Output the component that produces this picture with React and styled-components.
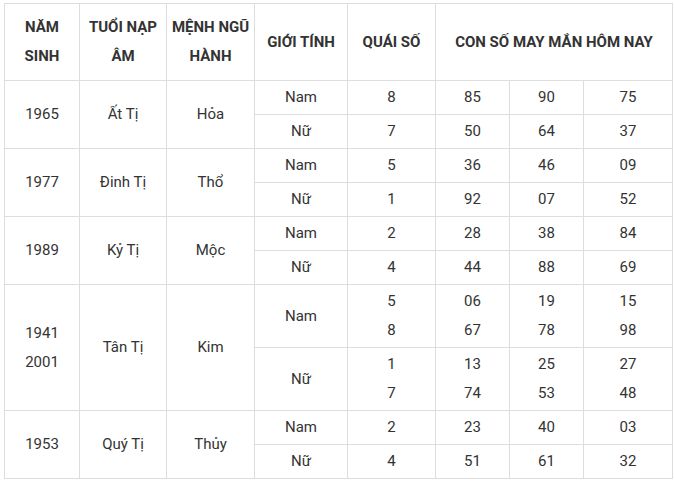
import React from 'react';
import styled, { createGlobalStyle } from 'styled-components';

const GlobalStyle = createGlobalStyle`
  body {
    margin: 0;
    padding: 3px 2px 0 4px;
    background: #ffffff;
    font-family: Roboto, "Liberation Sans", Arial, sans-serif;
  }
`;

const Table = styled.table`
  width: 668px;
  border-collapse: collapse;
  table-layout: fixed;
  color: #333333;
  font-size: 15px;
  line-height: 29px;
`;

const HeadCell = styled.th`
  border: 1px solid #dddddd;
  padding: 9px 2px;
  font-weight: 700;
  text-align: center;
  vertical-align: middle;
  white-space: nowrap;
`;

const Cell = styled.td`
  border: 1px solid #dddddd;
  padding: 2px 4px;
  text-align: center;
  vertical-align: middle;
  font-weight: 400;
`;

const Line = styled.div`
  line-height: 29px;
`;

const widths = [75, 87, 88, 93, 88, 74, 74, 89];

const data = [
  {
    year: ['1965'], tuoi: 'Ất Tị', menh: 'Hỏa',
    rows: [
      { g: 'Nam', q: ['8'], n: [['85'], ['90'], ['75']] },
      { g: 'Nữ', q: ['7'], n: [['50'], ['64'], ['37']] },
    ],
  },
  {
    year: ['1977'], tuoi: 'Đinh Tị', menh: 'Thổ',
    rows: [
      { g: 'Nam', q: ['5'], n: [['36'], ['46'], ['09']] },
      { g: 'Nữ', q: ['1'], n: [['92'], ['07'], ['52']] },
    ],
  },
  {
    year: ['1989'], tuoi: 'Kỷ Tị', menh: 'Mộc',
    rows: [
      { g: 'Nam', q: ['2'], n: [['28'], ['38'], ['84']] },
      { g: 'Nữ', q: ['4'], n: [['44'], ['88'], ['69']] },
    ],
  },
  {
    year: ['1941', '2001'], tuoi: 'Tân Tị', menh: 'Kim',
    rows: [
      { g: 'Nam', q: ['5', '8'], n: [['06', '67'], ['19', '78'], ['15', '98']] },
      { g: 'Nữ', q: ['1', '7'], n: [['13', '74'], ['25', '53'], ['27', '48']] },
    ],
  },
  {
    year: ['1953'], tuoi: 'Quý Tị', menh: 'Thủy',
    rows: [
      { g: 'Nam', q: ['2'], n: [['23'], ['40'], ['03']] },
      { g: 'Nữ', q: ['4'], n: [['51'], ['61'], ['32']] },
    ],
  },
];

const Lines = ({ items }) => items.map((t, i) => <Line key={i}>{t}</Line>);

const App = () => (
  <>
    <GlobalStyle />
    <Table>
      <colgroup>
        {widths.map((w, i) => <col key={i} style={{ width: w }} />)}
      </colgroup>
      <thead>
        <tr>
          <HeadCell><Line>NĂM</Line><Line>SINH</Line></HeadCell>
          <HeadCell><Line>TUỔI NẠP</Line><Line>ÂM</Line></HeadCell>
          <HeadCell><Line>MỆNH NGŨ</Line><Line>HÀNH</Line></HeadCell>
          <HeadCell>GIỚI TÍNH</HeadCell>
          <HeadCell>QUÁI SỐ</HeadCell>
          <HeadCell colSpan={3}>CON SỐ MAY MẮN HÔM NAY</HeadCell>
        </tr>
      </thead>
      <tbody>
        {data.map((d) =>
          d.rows.map((r, ri) => (
            <tr key={d.year[0] + ri}>
              {ri === 0 && (
                <>
                  <Cell rowSpan={2}><Lines items={d.year} /></Cell>
                  <Cell rowSpan={2}>{d.tuoi}</Cell>
                  <Cell rowSpan={2}>{d.menh}</Cell>
                </>
              )}
              <Cell>{r.g}</Cell>
              <Cell><Lines items={r.q} /></Cell>
              {r.n.map((col, ci) => (
                <Cell key={ci}><Lines items={col} /></Cell>
              ))}
            </tr>
          ))
        )}
      </tbody>
    </Table>
  </>
);

export default App;
